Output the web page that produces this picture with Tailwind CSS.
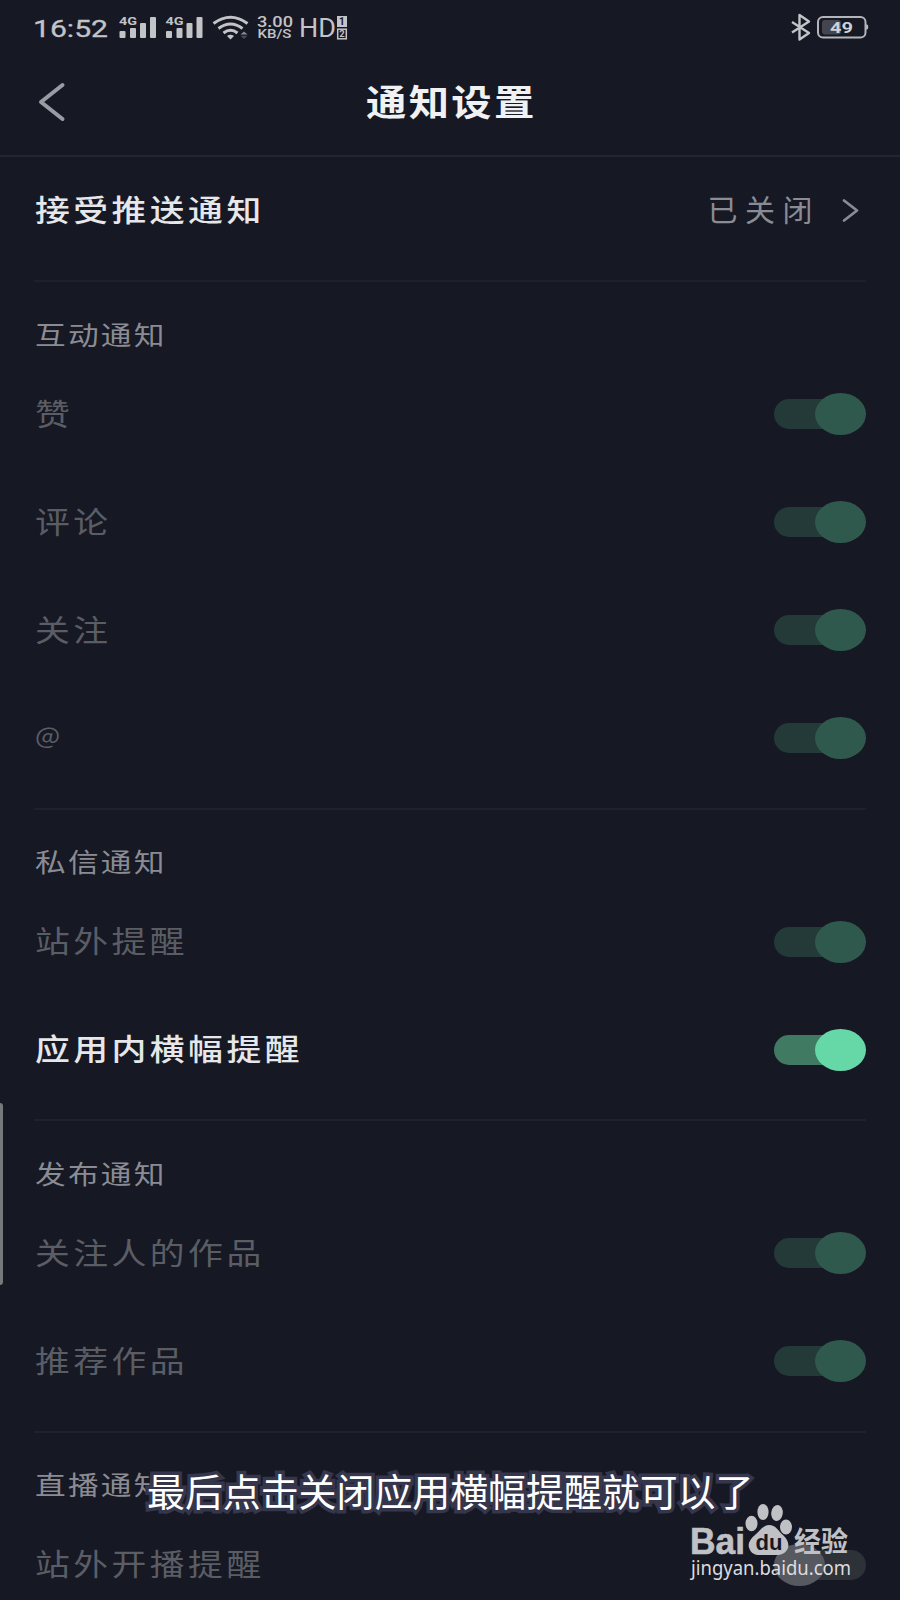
<!DOCTYPE html>
<html lang="zh-CN">
<head>
  <meta charset="UTF-8">
  <title>通知设置</title>
  <meta name="viewport" content="width=device-width, initial-scale=1.0">
  <script src="https://cdn.jsdelivr.net/npm/@tailwindcss/browser@4"></script>
</head>
<body class="bg-[#161823] font-['Noto_Sans_CJK_SC',sans-serif]">

  <div class="relative w-[900px] h-[1600px] overflow-hidden">

    <!-- 状态栏 -->
    <div class="flex justify-between h-[54px]">
      <svg class="w-[360px] h-[54px]" viewBox="0 0 360 54" fill="#c3c4c8" font-family="Roboto, sans-serif">
        <text x="33" y="36.5" font-size="23.5" textLength="75" lengthAdjust="spacingAndGlyphs" stroke="#c3c4c8" stroke-width="0.3">16:52</text>
        <g id="signal">
          <text x="119" y="25" font-size="11.5" font-weight="700" textLength="18" lengthAdjust="spacingAndGlyphs">4G</text>
          <rect x="119.5" y="31" width="6" height="7" rx="1"/>
          <rect x="130" y="28" width="6" height="10" rx="1"/>
          <rect x="140" y="23" width="6" height="15" rx="1"/>
          <rect x="150" y="17" width="6" height="21" rx="1"/>
        </g>
        <use href="#signal" x="46.5"/>
        <g fill="none" stroke="#c3c4c8" stroke-width="3">
          <path d="M213.5 23.5Q230.5 11 247.5 23.5"/>
          <path d="M218.5 28.5Q230.5 19.5 242.5 28.5"/>
          <path d="M223.5 33Q230.5 27.5 237.5 33"/>
        </g>
        <path d="M227 36Q230.5 33.5 234 36L230.5 39.5Z"/>
        <path d="M240.5 34.5L244 31.5L247.5 34.5Z" fill="#8b8c92"/>
        <path d="M240.5 35.8L244 39L247.5 35.8Z" fill="#4a4c54"/>
        <text x="257" y="26.5" font-size="14" font-weight="500" textLength="36" lengthAdjust="spacingAndGlyphs">3.00</text>
        <text x="257.5" y="38" font-size="12.5" font-weight="500" textLength="34" lengthAdjust="spacingAndGlyphs">KB/S</text>
        <text x="299" y="36.5" font-size="25" textLength="37" lengthAdjust="spacingAndGlyphs">HD</text>
        <rect x="337" y="16" width="10" height="11"/>
        <rect x="337.7" y="29.2" width="8.6" height="9.6" fill="none" stroke="#c3c4c8" stroke-width="1.5"/>
        <text x="339" y="25.3" font-size="10" font-weight="700" fill="#161823">1</text>
        <text x="339.2" y="37.4" font-size="9.5" font-weight="700">2</text>
      </svg>
      <svg class="w-[120px] h-[54px]" viewBox="780 0 120 54">
        <path d="M792 22L809 33L799.5 39.5V15L809 21.5L792 32.5" fill="none" stroke="#c3c4c8" stroke-width="2.4" stroke-linejoin="round"/>
        <rect x="818" y="17" width="47.5" height="20.5" rx="5" fill="none" stroke="#b4b5ba" stroke-width="2"/>
        <rect x="822" y="20" width="19" height="14.5" rx="3" fill="#43454f"/>
        <path d="M866 24.5h1a1.5 1.5 0 0 1 1.2 1.5v2a1.5 1.5 0 0 1-1.2 1.5h-1z" fill="#b4b5ba"/>
        <text x="830" y="32.5" font-size="15.5" font-weight="700" font-family="Roboto, sans-serif" fill="#d0d1d4" textLength="23" lengthAdjust="spacingAndGlyphs">49</text>
      </svg>
    </div>

    <!-- 标题栏 -->
    <header class="flex items-center h-[103px] pb-[8px] border-b-2 border-[#232530]">
      <svg class="ml-[36px] w-[34px] h-[44px]" viewBox="0 0 34 44" fill="none" stroke="#9b9ca3" stroke-width="4" stroke-linecap="round" stroke-linejoin="round">
        <path d="M26.5 6L5 23L26.5 40"/>
      </svg>
      <h1 class="ml-[296px] -mt-[2px] origin-left scale-x-[1.12] text-[36px] leading-none tracking-[2.1px] font-bold text-[#f0f1f3]">通知设置</h1>
    </header>

    <main class="px-[34px]">
      <section class="flex items-center justify-between h-[125px] pb-[17px] border-b-2 border-[#1e202a]">
        <span class="ml-px -mt-[5px] origin-left scale-x-[1.16] text-[30px] leading-none tracking-[3px] font-medium text-[#e6e7ea]">接受推送通知</span>
        <span class="flex items-center">
          <span class="-mt-[5px] text-[30px] leading-none tracking-[7.5px] text-[#8b8c93]">已关闭</span>
          <svg class="ml-[20px] mr-[6px] w-[20px] h-[26px]" viewBox="0 0 20 26" fill="none" stroke="#8b8c93" stroke-width="2.8" stroke-linecap="round" stroke-linejoin="round">
            <path d="M4 3.5L17 13.5L4 23.5"/>
          </svg>
        </span>
      </section>

      <div id="groups"></div>
    </main>

    <!-- 左侧滑动条 -->
    <div class="absolute left-0 top-[1103px] w-[3px] h-[182px] rounded-r-[3px] bg-[#77787a]"></div>

    <!-- 字幕 -->
    <p class="absolute left-[147px] top-[1462px] text-[38px] leading-[56px] tracking-[-0.1px] whitespace-nowrap text-white [-webkit-text-stroke:7px_#35364c] [paint-order:stroke_fill] [stroke-linejoin:round]">最后点击关闭应用横幅提醒就可以了</p>

    <!-- 水印 -->
    <svg class="absolute left-[680px] top-[1495px] w-[190px] h-[95px]" viewBox="680 1495 190 95" fill="#c0c1c4">
      <text x="690" y="1553.5" font-size="36" font-weight="700" font-family="Liberation Sans, sans-serif" textLength="55" lengthAdjust="spacingAndGlyphs" stroke="#c0c1c4" stroke-width="0.6">Bai</text>
      <ellipse cx="751.5" cy="1523.5" rx="6" ry="7.8"/>
      <ellipse cx="763" cy="1512" rx="5.6" ry="8"/>
      <ellipse cx="777" cy="1513" rx="5.8" ry="8" transform="rotate(8 777 1513)"/>
      <ellipse cx="786" cy="1527" rx="6" ry="7.5"/>
      <path d="M769 1525C763 1525 760 1531 755 1535C749 1540 747 1545 750 1550C753 1556 759 1555 768 1555C777 1555 783 1556 787 1550C790 1545 788 1540 783 1535C778 1531 776 1525 769 1525Z"/>
      <text x="755.5" y="1549.5" font-size="22" font-weight="700" font-family="Liberation Sans, sans-serif" fill="#161823" textLength="27" lengthAdjust="spacingAndGlyphs">du</text>
      <text x="794" y="1551.5" font-size="28" font-weight="700" font-family="Noto Sans CJK SC, sans-serif" textLength="54" lengthAdjust="spacingAndGlyphs">经验</text>
      <text x="691" y="1574.5" font-size="19" font-family="Noto Sans, sans-serif" fill="#dcdddf" textLength="160" lengthAdjust="spacingAndGlyphs">jingyan.baidu.com</text>
    </svg>
  </div>

  <script>
    const groups = [
      { title: '互动通知', rows: [['赞', 'dim'], ['评论', 'dim'], ['关注', 'dim'], ['@', 'dim']] },
      { title: '私信通知', rows: [['站外提醒', 'dim'], ['应用内横幅提醒', 'on']] },
      { title: '发布通知', rows: [['关注人的作品', 'dim'], ['推荐作品', 'dim']] },
      { title: '直播通知', rows: [['站外开播提醒', 'off']] },
    ];

    const styles = {
      dim: { text: 'text-[#5b5d65]', track: 'bg-[#233a38] right-[10px]', knob: 'bg-[#30594e] right-0' },
      on: { text: 'text-[#e6e7ea] font-medium', track: 'bg-[#407a63] right-[10px]', knob: 'bg-[#66d8a7] right-0' },
      off: { text: 'text-[#5b5d65]', track: 'bg-[#2d3138] right-0', knob: 'bg-[#565a60] left-0' },
    };

    function renderRow([label, state]) {
      const s = styles[state];
      const size = label === '@' ? 'text-[23px] -mt-[8px]' : 'text-[30px] tracking-[3px] -mt-[5px]';
      return `
        <div class="flex items-center justify-between h-[108px]">
          <span class="${size} ml-px origin-left scale-x-[1.16] leading-none ${s.text}">${label}</span>
          <span class="relative w-[92px] h-[42px]">
            <span class="absolute top-[6px] w-[82px] h-[30px] rounded-full ${s.track}"></span>
            <span class="absolute top-0 w-[51px] h-[42px] rounded-[50%] ${s.knob}"></span>
          </span>
        </div>`;
    }

    document.getElementById('groups').innerHTML = groups.map(g => `
      <section class="pb-[15.5px] border-b-2 border-[#1f212b]">
        <div class="flex items-center h-[78px] pt-[25px]">
          <h2 class="ml-px origin-left scale-x-[1.18] text-[26px] leading-none tracking-[1.9px] text-[#8b8c93]">${g.title}</h2>
        </div>
        ${g.rows.map(renderRow).join('')}
      </section>`).join('');
  </script>

</body>
</html>
